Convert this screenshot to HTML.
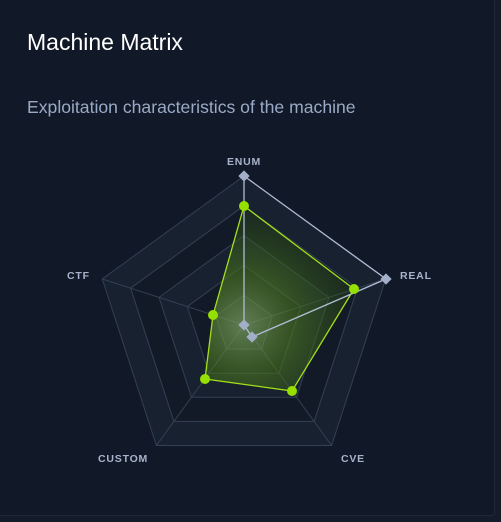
<!DOCTYPE html>
<html><head><meta charset="utf-8"><style>
html,body{margin:0;padding:0;background:#141c2a;}
body{width:501px;height:522px;position:relative;overflow:hidden;font-family:"Liberation Sans",sans-serif;}
.card{position:absolute;left:0;top:0;width:494px;height:515px;background:#111827;border-right:1px solid #1f2937;border-bottom:1px solid #1f2937;border-bottom-right-radius:4px;}
h1{position:absolute;left:27px;top:29px;margin:0;font-size:23px;font-weight:400;color:#fff;}
p{position:absolute;left:27px;top:97px;margin:0;font-size:17.6px;color:#9aaac6;}
svg{position:absolute;left:0;top:0;}
.l{font-size:10.5px;font-weight:700;fill:#a7b3cc;letter-spacing:0.8px;}
</style></head><body>
<div class="card">
<h1>Machine Matrix</h1>
<p>Exploitation characteristics of the machine</p>
</div>
<svg width="501" height="522">
<defs><radialGradient id="g" cx="244" cy="325" r="130" gradientUnits="userSpaceOnUse"><stop offset="0" stop-color="#8fb86a" stop-opacity="0.6"/><stop offset="0.4" stop-color="#4a7a1a" stop-opacity="0.55"/><stop offset="1" stop-color="#2d4a10" stop-opacity="0.2"/></radialGradient></defs>
<g stroke="#334052" stroke-width="1">
<polygon points="244,176 385.7,279 331.6,445.5 156.4,445.5 102.3,279" fill="#182130"/>
<polygon points="244,205.8 357.4,288.2 314.1,421.4 173.9,421.4 130.6,288.2" fill="#121a27"/>
<polygon points="244,235.6 329,297.4 296.5,397.3 191.5,397.3 159,297.4" fill="#182130"/>
<polygon points="244,265.4 300.7,306.6 279,373.2 209,373.2 187.3,306.6" fill="#121a27"/>
<polygon points="244,295.2 272.3,315.8 261.5,349.1 226.5,349.1 215.7,315.8" fill="#182130"/>
<line x1="244" y1="325" x2="244" y2="176"/><line x1="244" y1="325" x2="385.7" y2="279"/><line x1="244" y1="325" x2="331.6" y2="445.5"/><line x1="244" y1="325" x2="156.4" y2="445.5"/><line x1="244" y1="325" x2="102.3" y2="279"/>
</g>
<polygon points="244,206 354,289 292,391 205,379 213,315" fill="url(#g)" stroke="#a3e01a" stroke-width="1.3"/>
<polygon points="244,176 386,279 252,337 244,325 244,325" fill="none" stroke="#b0bcd4" stroke-width="1.3"/>
<g fill="#95e000"><circle cx="244" cy="206" r="5"/><circle cx="354" cy="289" r="5"/><circle cx="292" cy="391" r="5"/><circle cx="205" cy="379" r="5"/><circle cx="213" cy="315" r="5"/></g>
<g fill="#a3afc8"><rect x="240" y="172" width="8" height="8" transform="rotate(45 244 176)"/><rect x="382" y="275" width="8" height="8" transform="rotate(45 386 279)"/><rect x="248" y="333" width="8" height="8" transform="rotate(45 252 337)"/><rect x="240" y="321" width="8" height="8" transform="rotate(45 244 325)"/></g>
<text class="l" x="244" y="165" text-anchor="middle">ENUM</text>
<text class="l" x="400" y="279">REAL</text>
<text class="l" x="341" y="462">CVE</text>
<text class="l" x="98" y="462">CUSTOM</text>
<text class="l" x="67" y="279">CTF</text>
</svg>
</body></html>
